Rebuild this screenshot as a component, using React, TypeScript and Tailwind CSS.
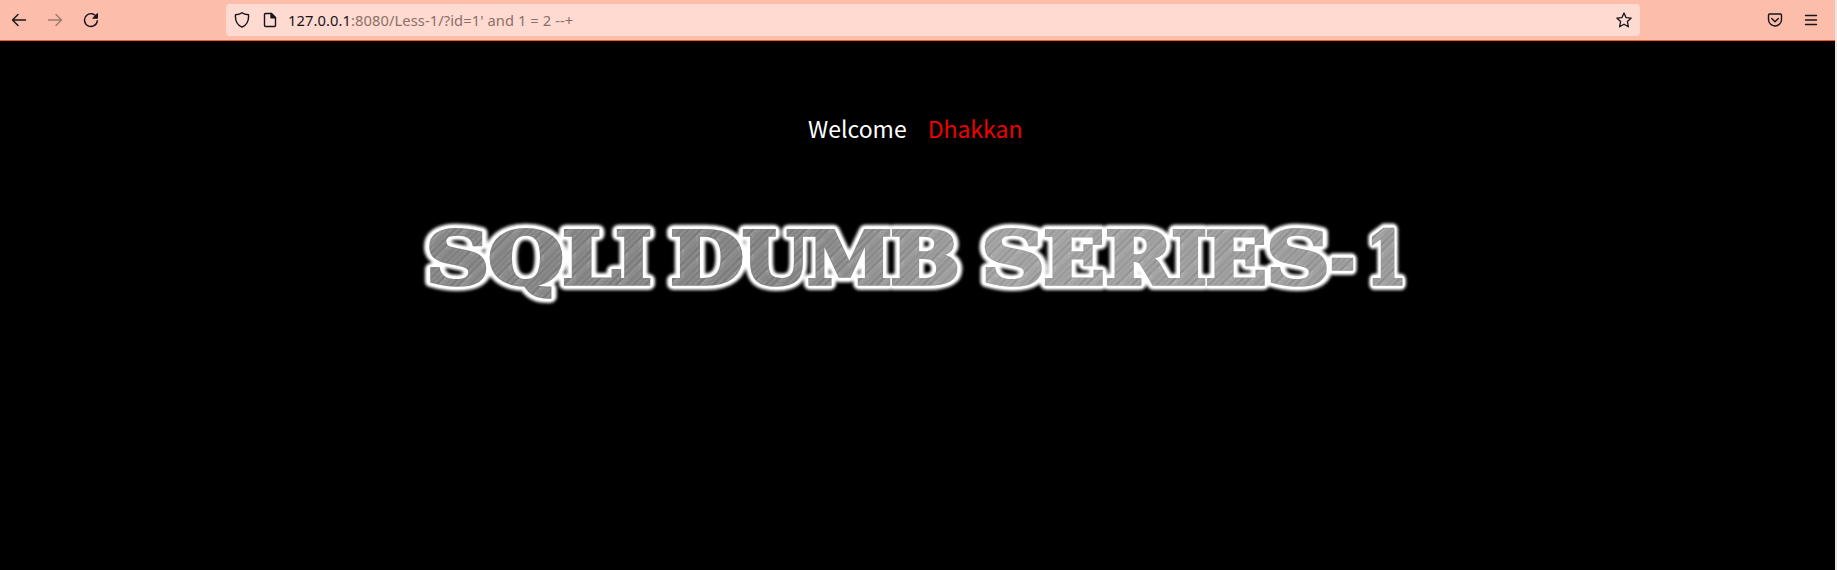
import React from "react";

type Glyph = [char: string, x: number, width: number];

// Each glyph's left edge and advance inside the banner, which starts at x = 400.
const words: Glyph[][] = [
  [["S", 25.5, 64], ["Q", 88, 76], ["L", 162, 59], ["I", 215, 37]],
  [["D", 270, 74], ["U", 342, 68], ["M", 407, 85], ["B", 490, 70]],
  [["S", 581, 64], ["E", 643, 62], ["R", 705, 68], ["I", 771, 36], ["E", 805, 62], ["S", 866, 64], ["-", 930, 25], ["1", 966, 41]],
];

function Words() {
  return (
    <>
      {words.map((word, i) => (
        <text key={i} y="74">
          {word.map(([char, x, width], j) => (
            <tspan key={j} x={x} textLength={width} lengthAdjust="spacingAndGlyphs">
              {char}
            </tspan>
          ))}
        </text>
      ))}
    </>
  );
}

function Banner() {
  return (
    <svg width="1030" height="110" viewBox="0 0 1030 110" className="block font-['DejaVu_Serif',serif] text-[72px] font-bold">
      <defs>
        <linearGradient id="metal" x1="0" x2="1030" y1="0" y2="0" gradientUnits="userSpaceOnUse">
          <stop offset="0" stopColor="#838383" />
          <stop offset=".38" stopColor="#828282" />
          <stop offset=".58" stopColor="#a0a0a0" />
          <stop offset="1" stopColor="#979797" />
        </linearGradient>
        <filter id="glow" x="0" y="0" width="1030" height="110" filterUnits="userSpaceOnUse" colorInterpolationFilters="sRGB">
          <feGaussianBlur in="SourceGraphic" stdDeviation="1.8" />
        </filter>
        <pattern id="grain" width="37" height="200" patternUnits="userSpaceOnUse" patternTransform="rotate(45)">
          <path d="M2 0V200M6.5 0V200M13 0V200M18 0V200M22.5 0V200M31 0V200M35 0V200" stroke="#fff" strokeOpacity=".2" strokeWidth=".6" />
          <path d="M4.5 0V200M11 0V200M15.5 0V200M20 0V200M27 0V200M33 0V200" stroke="#222" strokeOpacity=".13" strokeWidth=".7" />
          <path d="M9 0V200M25 0V200" stroke="#fff" strokeOpacity=".07" strokeWidth="5" />
        </pattern>
      </defs>
      <g aria-hidden="true" filter="url(#glow)" fill="#fff" stroke="#fff" strokeWidth="12" strokeLinejoin="round">
        <Words />
      </g>
      <g fill="#fff" stroke="#fff" strokeWidth="8" strokeLinejoin="round">
        <Words />
      </g>
      <g aria-hidden="true" fill="url(#metal)" stroke="url(#metal)" strokeWidth="3.4">
        <Words />
      </g>
      <g aria-hidden="true" fill="url(#grain)" stroke="url(#grain)" strokeWidth="3.4">
        <Words />
      </g>
    </svg>
  );
}

const icon = { fill: "none", stroke: "currentColor", strokeWidth: 1.4, strokeLinecap: "round", strokeLinejoin: "round" } as const;

export default function App() {
  return (
    <div className="flex h-[570px] w-[1837px] overflow-hidden bg-[#e9e6e4]">
      <div className="flex w-[1835px] flex-col bg-black">
        <header className="flex h-[41px] shrink-0 items-center border-b border-[#fb5424] bg-[#fcbdab] text-[#15141a]">
          <div className="flex w-[226px] items-center gap-5 pl-[11px]">
            <svg width="16" height="16" viewBox="0 0 16 16" {...icon}><path d="M14.5 8H1.8M7 2.5 1.5 8 7 13.5" /></svg>
            <svg width="16" height="16" viewBox="0 0 16 16" {...icon} className="opacity-40"><path d="M1.5 8h12.7M9 2.5 14.5 8 9 13.5" /></svg>
            <svg width="16" height="16" viewBox="0 0 16 16" {...icon}><path d="M13.8 5.5A6.4 6.4 0 1 0 14.3 8.8" /><path d="M14.5 1.8v4.4h-4.4Z" fill="currentColor" strokeWidth="1" /></svg>
          </div>
          <div className="flex h-8 w-[1414px] items-center rounded-[4px] bg-[#ffdad1] pl-2">
            <svg width="16" height="16" viewBox="0 0 16 16" {...icon}><path d="M8 .8C6.5 2.1 4.2 2.7 1.5 2.8 1 8.7 3.5 13.3 8 15.2c4.5-1.9 7-6.5 6.5-12.4C11.8 2.7 9.5 2.1 8 .8Z" /></svg>
            <svg width="16" height="16" viewBox="0 0 16 16" {...icon} className="ml-3"><path d="M9.5 1.5H3.5a1 1 0 0 0-1 1v11a1 1 0 0 0 1 1h9a1 1 0 0 0 1-1v-8Z" /><path d="M9 1.5v4.3h4.4Z" fill="currentColor" /></svg>
            <span className="ml-[10px] whitespace-pre font-['Noto_Sans',sans-serif] text-[14.7px] leading-8 tracking-[0.085px] text-[#8c6f69]"><span className="text-[#15141a]">127.0.0.1</span>:8080/Less-1/?id=1' and 1 = 2 --+</span>
            <svg width="16" height="16" viewBox="0 0 16 16" {...icon} strokeWidth="1.3" className="ml-auto mr-2"><path d="m8 1 2 4.6 5.2.5-3.8 3.5 1 5.2L8 12.2l-4.4 2.6 1-5.2L.8 6.1 6 5.6Z" /></svg>
          </div>
          <div className="ml-auto mr-[16px] flex items-center gap-5">
            <svg width="16" height="16" viewBox="0 0 16 16" {...icon}><path d="M2.7 2h10.6c.7 0 1.2.5 1.2 1.2v4.3a6.5 6.5 0 0 1-13 0V3.2C1.5 2.5 2 2 2.7 2ZM4.7 6.6 8 9.8l3.3-3.2" /></svg>
            <svg width="16" height="16" viewBox="0 0 16 16" {...icon}><path d="M2.5 3.5h11M2.5 8h11M2.5 12.5h11" /></svg>
          </div>
        </header>
        <main className="flex flex-col">
          <p className="mt-[69px] h-9 whitespace-pre pl-[808px] font-['Noto_Sans_CJK_JP',sans-serif] text-[23px] leading-9 text-white">
            Welcome<span className="ml-[21px] text-[#f00000]">Dhakkan</span>
          </p>
          <div className="mt-[64px] pl-[400px]"><Banner /></div>
        </main>
      </div>
    </div>
  );
}
